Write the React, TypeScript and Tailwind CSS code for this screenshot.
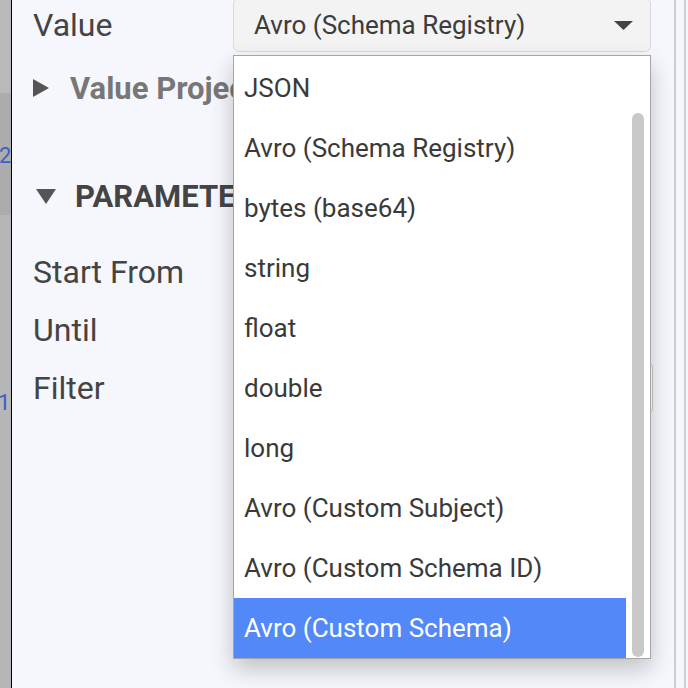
import React from "react";

const OPTIONS = [
  "JSON",
  "Avro (Schema Registry)",
  "bytes (base64)",
  "string",
  "float",
  "double",
  "long",
  "Avro (Custom Subject)",
  "Avro (Custom Schema ID)",
  "Avro (Custom Schema)",
];

const SELECTED = "Avro (Custom Schema)";

function Caret({ open }: { open: boolean }): React.ReactElement {
  return open ? (
    <svg width="20" height="16" viewBox="0 0 20 16" className="shrink-0">
      <path d="M0 1 L20 1 L10 16 Z" fill="#555" />
    </svg>
  ) : (
    <svg width="16" height="18" viewBox="0 0 16 18" className="shrink-0">
      <path d="M0 0 L16 9 L0 18 Z" fill="#555" />
    </svg>
  );
}

function FieldRow({ label, children }: { label: string; children?: React.ReactNode }): React.ReactElement {
  return (
    <div className="flex items-center h-[58px]">
      <div className="w-[200px] text-[32px] text-[#444] leading-none">{label}</div>
      <div className="flex-1">{children}</div>
    </div>
  );
}

export default function App(): React.ReactElement {
  return (
    <div className="w-[688px] h-[688px] flex overflow-hidden bg-[#f6f7fc]" style={{ fontFamily: "Roboto, 'Liberation Sans', sans-serif" }}>
      {/* gutter of the editor behind */}
      <div className="w-[12px] shrink-0 flex flex-col bg-[#b6b6b6] border-r border-black overflow-hidden text-[#3d5fc4] text-[22px] leading-none">
        <div className="h-[93px] bg-[#b9b9b9]" />
        <div className="h-[122px] bg-[#acacac] flex flex-col pt-[52px]">
          <span className="-ml-[1px]">2</span>
        </div>
        <div className="pt-[177px]">
          <span className="-ml-[2px]">1</span>
        </div>
      </div>

      {/* form panel */}
      <div className="relative w-[662px] shrink-0 bg-[#f6f7fc]">
        <div className="flex flex-col pl-[21px] -mt-[2px]">
          <div className="flex items-center h-[54px]">
            <div className="w-[200px] text-[32px] text-[#444] leading-none">Value</div>
            <div className="w-[418px] h-[54px] flex items-center justify-between pl-[20px] pr-[17px] bg-[#f3f3f3] border border-[#d9d9d9] rounded-[6px]">
              <span className="text-[26px] text-[#3c3c3c]">Avro (Schema Registry)</span>
              <svg width="19" height="9" viewBox="0 0 19 9">
                <path d="M0 0 L19 0 L9.5 9 Z" fill="#444" />
              </svg>
            </div>
          </div>

          {/* the open menu covers the right part of these headings */}
          <div className="flex items-center gap-[21px] h-[56px] mt-[8px] w-[200px] overflow-hidden">
            <Caret open={false} />
            <span className="text-[31px] font-bold text-[#777] leading-none whitespace-nowrap">Value Projection</span>
          </div>

          <div className="flex items-center gap-[19px] h-[56px] mt-[52px] pl-[3px] w-[200px] overflow-hidden">
            <Caret open={true} />
            <span className="text-[31px] font-bold text-[#444] leading-none whitespace-nowrap">PARAMETERS</span>
          </div>

          <div className="flex flex-col mt-[19px]">
            <FieldRow label="Start From" />
            <FieldRow label="Until" />
            <FieldRow label="Filter">
              <div className="w-[420px] h-[50px] border border-[#cfcfcf] rounded-[4px] bg-white" />
            </FieldRow>
          </div>
        </div>

        {/* open select menu */}
        <div className="absolute left-[221px] top-[55px] w-[418px] h-[604px] flex bg-white border border-[#a5a5a5] shadow-[0_10px_22px_rgba(0,0,0,0.22)]">
          <div className="flex-1 flex flex-col pt-[2px]">
            {OPTIONS.map((o) => (
              <div
                key={o}
                className={
                  o === SELECTED
                    ? "h-[60px] flex items-center pl-[10px] text-[26px] bg-[#5288f7] text-white"
                    : "h-[60px] flex items-center pl-[10px] text-[26px] text-[#3a3a3a]"
                }
              >
                {o}
              </div>
            ))}
          </div>
          <div className="w-[24px] flex justify-center pt-[57px] pb-[1px]">
            <div className="w-[12px] h-full rounded-full bg-[#c8c8c8]" />
          </div>
        </div>
      </div>

      {/* right window edges */}
      <div className="w-[2px] shrink-0 bg-[#cdcdcd]" />
      <div className="w-[8px] shrink-0 bg-[#f6f7fc]" />
      <div className="w-[2px] shrink-0 bg-[#d0d0d0]" />
      <div className="flex-1 bg-[#f6f7fc]" />
    </div>
  );
}
